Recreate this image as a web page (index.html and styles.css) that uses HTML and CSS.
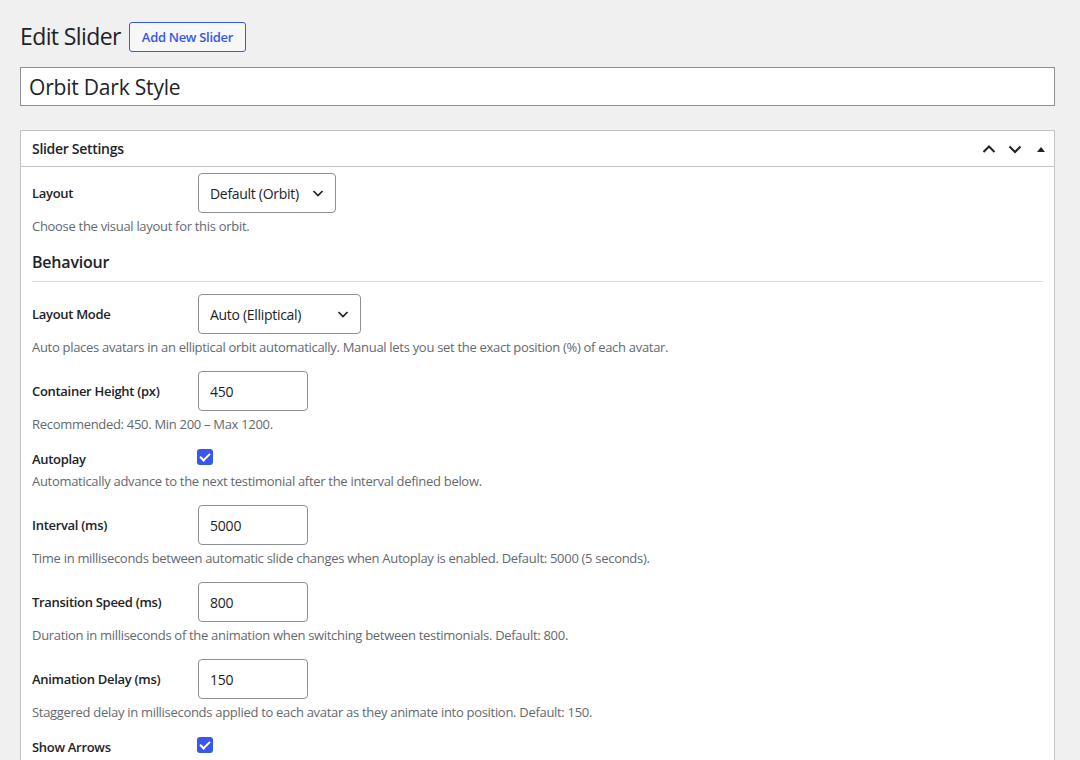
FILE: index.html
```html
<!DOCTYPE html>
<html lang="en">
<head>
    <meta charset="UTF-8">
    <meta name="viewport" content="width=device-width, initial-scale=1.0">
    <title>Edit Slider</title>
    <link rel="stylesheet" href="styles.css">
</head>
<body>
    <div class="wrap">
        <div class="page-head">
            <h1>Edit Slider</h1>
            <a href="#" class="page-title-action">Add New Slider</a>
        </div>

        <input type="text" class="title-input" value="Orbit Dark Style">

        <div class="postbox">
            <div class="postbox-header">
                <h2>Slider Settings</h2>
                <div class="handle-actions">
                    <button class="handle-btn" aria-label="Move up">
                        <svg width="16" height="16" viewBox="0 0 16 16"><path d="M2.5 11 L8 5.5 L13.5 11" fill="none" stroke="#1d2327" stroke-width="2"/></svg>
                    </button>
                    <button class="handle-btn" aria-label="Move down">
                        <svg width="16" height="16" viewBox="0 0 16 16"><path d="M2.5 5.5 L8 11 L13.5 5.5" fill="none" stroke="#1d2327" stroke-width="2"/></svg>
                    </button>
                    <button class="handle-btn" aria-label="Toggle panel">
                        <svg width="10" height="10" viewBox="0 0 10 10"><path d="M1 8 L5 3 L9 8 Z" fill="#1d2327"/></svg>
                    </button>
                </div>
            </div>

            <div class="inside">
                <div class="field">
                    <div class="field-row">
                        <label class="field-label">Layout</label>
                        <select class="select layout-select">
                            <option>Default (Orbit)</option>
                        </select>
                    </div>
                    <p class="description">Choose the visual layout for this orbit.</p>
                </div>

                <h3 class="section-title">Behaviour</h3>

                <div class="field">
                    <div class="field-row">
                        <label class="field-label">Layout Mode</label>
                        <select class="select mode-select">
                            <option>Auto (Elliptical)</option>
                        </select>
                    </div>
                    <p class="description">Auto places avatars in an elliptical orbit automatically. Manual lets you set the exact position (%) of each avatar.</p>
                </div>

                <div class="field">
                    <div class="field-row">
                        <label class="field-label">Container Height (px)</label>
                        <input type="number" class="num-input" value="450">
                    </div>
                    <p class="description">Recommended: 450. Min 200 – Max 1200.</p>
                </div>

                <div class="field">
                    <div class="field-row check-row">
                        <label class="field-label">Autoplay</label>
                        <span class="checkbox checked"></span>
                    </div>
                    <p class="description">Automatically advance to the next testimonial after the interval defined below.</p>
                </div>

                <div class="field">
                    <div class="field-row">
                        <label class="field-label">Interval (ms)</label>
                        <input type="number" class="num-input" value="5000">
                    </div>
                    <p class="description">Time in milliseconds between automatic slide changes when Autoplay is enabled. Default: 5000 (5 seconds).</p>
                </div>

                <div class="field">
                    <div class="field-row">
                        <label class="field-label">Transition Speed (ms)</label>
                        <input type="number" class="num-input" value="800">
                    </div>
                    <p class="description">Duration in milliseconds of the animation when switching between testimonials. Default: 800.</p>
                </div>

                <div class="field">
                    <div class="field-row">
                        <label class="field-label">Animation Delay (ms)</label>
                        <input type="number" class="num-input" value="150">
                    </div>
                    <p class="description">Staggered delay in milliseconds applied to each avatar as they animate into position. Default: 150.</p>
                </div>

                <div class="field">
                    <div class="field-row check-row">
                        <label class="field-label">Show Arrows</label>
                        <span class="checkbox checked"></span>
                    </div>
                </div>
            </div>
        </div>
    </div>
</body>
</html>
```

FILE: styles.css
```css
body {
    margin: 0;
    background-color: #f0f0f1;
    color: #1d2327;
    font-family: "Open Sans", "Noto Sans", sans-serif;
    font-size: 13px;
    line-height: 18px;
    letter-spacing: -0.3px;
}

.wrap {
    padding: 20px 25px 0 20px;
}

.page-head {
    display: flex;
    align-items: center;
    gap: 8px;
    height: 34px;
}

.page-head h1 {
    margin: 0;
    font-size: 23px;
    font-weight: 400;
    line-height: 1.3;
    letter-spacing: -0.6px;
    color: #1d2327;
}

.page-title-action {
    display: inline-block;
    padding: 0 12px;
    height: 28px;
    line-height: 28px;
    border: 1px solid #3858e9;
    border-radius: 3px;
    color: #3858e9;
    font-size: 13px;
    font-weight: 600;
    text-decoration: none;
    background: #f6f7f7;
}

.title-input {
    display: block;
    box-sizing: border-box;
    width: 100%;
    height: 39px;
    margin-top: 13px;
    padding: 3px 8px;
    border: 1px solid #8c8f94;
    border-radius: 0;
    background: #fff;
    font-family: inherit;
    font-size: 21px;
    letter-spacing: -0.2px;
    color: #1d2327;
    outline: none;
}

.postbox {
    margin-top: 24px;
    background: #fff;
    border: 1px solid #c3c4c7;
    box-shadow: 0 1px 1px rgba(0, 0, 0, 0.04);
}

.postbox-header {
    display: flex;
    align-items: center;
    justify-content: space-between;
    height: 35px;
    border-bottom: 1px solid #c3c4c7;
}

.postbox-header h2 {
    margin: 0;
    padding: 0 11px;
    font-size: 14px;
    font-weight: 600;
}

.handle-actions {
    display: flex;
}

.handle-btn {
    width: 26px;
    height: 35px;
    padding: 0;
    border: none;
    background: none;
    display: flex;
    align-items: center;
    justify-content: center;
    cursor: pointer;
}

.inside {
    padding: 6px 11px 12px;
}

.field {
    margin-bottom: 15px;
}

.field-row {
    display: flex;
    align-items: center;
}

.field-label {
    flex: 0 0 166px;
    font-weight: 600;
    color: #1d2327;
}

.description {
    margin: 4px 0 0;
    color: #646970;
}

.select {
    box-sizing: border-box;
    height: 40px;
    padding: 0 28px 0 11px;
    border: 1px solid #8c8f94;
    border-radius: 4px;
    background: #fff url("data:image/svg+xml,%3Csvg xmlns='http://www.w3.org/2000/svg' width='12' height='12' viewBox='0 0 12 12'%3E%3Cpath d='M1.5 4 L6 8.5 L10.5 4' fill='none' stroke='%231d2327' stroke-width='1.7'/%3E%3C/svg%3E") no-repeat right 11px center;
    -webkit-appearance: none;
    appearance: none;
    font-family: inherit;
    font-size: 14px;
    letter-spacing: -0.3px;
    color: #1d2327;
}

.layout-select {
    width: 138px;
}

.mode-select {
    width: 163px;
}

.num-input {
    box-sizing: border-box;
    width: 110px;
    height: 40px;
    padding: 0 11px;
    border: 1px solid #8c8f94;
    border-radius: 4px;
    font-family: inherit;
    font-size: 14px;
    letter-spacing: -0.2px;
    color: #1d2327;
    -moz-appearance: textfield;
}

.num-input::-webkit-inner-spin-button,
.num-input::-webkit-outer-spin-button {
    -webkit-appearance: none;
    margin: 0;
}

.check-row {
    align-items: flex-start;
    padding-top: 1px;
}

.check-row .field-label {
    padding-top: 1px;
}

.checkbox {
    box-sizing: border-box;
    width: 16px;
    height: 16px;
    margin-left: -1px;
    border-radius: 3px;
    background: #3858e9;
    display: flex;
    align-items: center;
    justify-content: center;
}

.checkbox.checked::after {
    content: "";
    width: 4px;
    height: 8px;
    border: solid #fff;
    border-width: 0 2px 2px 0;
    transform: translateY(-1px) rotate(45deg);
}

.section-title {
    margin: 16px 0 0;
    padding-bottom: 8px;
    border-bottom: 1px solid #dcdcde;
    font-size: 16px;
    line-height: 22px;
    font-weight: 600;
    letter-spacing: -0.2px;
}

.section-title + .field {
    margin-top: 12px;
}
```
